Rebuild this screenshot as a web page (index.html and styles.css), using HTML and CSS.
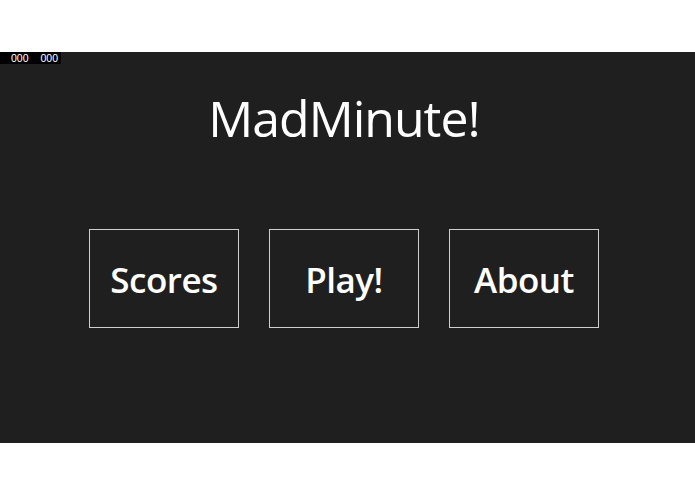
FILE: index.html
```html
<!DOCTYPE html>
<html>
<head>
<meta charset="utf-8">
<link rel="stylesheet" href="styles.css">
</head>
<body>
<div class="app">
  <div class="counter"><span>000</span><span>000</span></div>
  <h1 class="title">MadMinute!</h1>
  <div class="menu">
    <div class="btn">Scores</div>
    <div class="btn">Play!</div>
    <div class="btn">About</div>
  </div>
</div>
</body>
</html>
```
FILE: styles.css
```css
html, body {
  margin: 0;
  padding: 0;
  background: #ffffff;
}
body {
  padding-top: 52px;
  font-family: "Open Sans", "Noto Sans", sans-serif;
}
.app {
  position: relative;
  height: 391px;
  background: #1f1f1f;
  color: #ffffff;
  display: flex;
  flex-direction: column;
  align-items: center;
  padding-right: 7px;
}
.counter {
  position: absolute;
  left: 0;
  top: 0;
  width: 61px;
  height: 12px;
  background: #000000;
  color: #ffffff;
  font-family: "Liberation Sans", sans-serif;
  font-size: 10.5px;
  line-height: 12px;
  display: flex;
  gap: 12px;
  padding-left: 11px;
  box-sizing: border-box;
}
.title {
  margin: 32px 0 0 0;
  font-size: 50px;
  font-weight: 400;
  line-height: 68px;
  letter-spacing: -1px;
}
.menu {
  margin-top: 77px;
  display: flex;
  gap: 30px;
}
.btn {
  width: 150px;
  height: 99px;
  box-sizing: border-box;
  border: 1px solid #cfcfcf;
  display: flex;
  align-items: center;
  justify-content: center;
  font-size: 35px;
  font-weight: 600;
  padding-top: 2px;
  letter-spacing: -0.5px;
}
```
